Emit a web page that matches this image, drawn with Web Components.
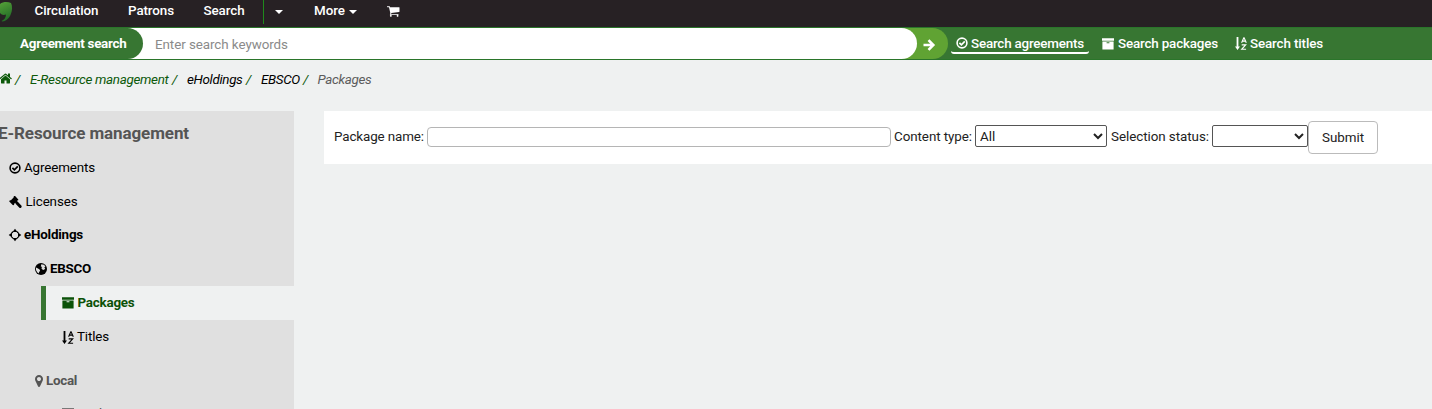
<!DOCTYPE html>
<html lang="en">
<head>
<meta charset="utf-8">
<title>E-Resource management</title>
<style>
html,body{margin:0;height:100%;overflow:hidden;background:#eff1f1}
body{font:13.4px/18px Roboto,"Liberation Sans",sans-serif;color:#000}
</style>
</head>
<body>
<erm-app></erm-app>
<script>
const define = (name, markup, setup) => {
  const template = document.createElement('template');
  template.innerHTML = markup;
  customElements.define(name, class extends HTMLElement {
    connectedCallback() {
      if (this.shadowRoot) return;
      this.attachShadow({mode: 'open'}).append(template.content.cloneNode(true));
      if (setup) setup(this, this.shadowRoot);
    }
  });
};

const icons = {
  home: ['64 200 1664 1400', '<path d="M1472 992v480q0 26-19 45t-45 19h-384v-384h-256v384h-384q-26 0-45-19t-19-45v-480q0-1 .5-3t.5-3l575-474 575 474q1 2 1 6zm223-69l-62 74q-8 9-21 11h-3q-13 0-21-7l-692-577-692 577q-12 8-24 7-13-2-21-11l-62-74q-8-10-7-23.5t11-21.5l719-599q32-26 76-26t76 26l244 204v-195q0-14 9-23t23-9h192q14 0 23 9t9 23v408l219 182q10 8 11 21.5t-7 23.5z"/>'],
  cart: ['64 256 1664 1408', '<path d="M704 1536q0 52-38 90t-90 38-90-38-38-90 38-90 90-38 90 38 38 90zm896 0q0 52-38 90t-90 38-90-38-38-90 38-90 90-38 90 38 38 90zm128-1088v512q0 24-16.5 42.5t-40.5 21.5l-1044 122q13 60 13 70 0 16-24 64h920q26 0 45 19t19 45-19 45-45 19h-1024q-26 0-45-19t-19-45q0-11 8-31.5t16-36 21.5-40 15.5-29.5l-177-823h-204q-26 0-45-19t-19-45 19-45 45-19h256q16 0 28.5 6.5t19.5 15.5 13 24.5 8 26 5.5 29.5 4.5 26h1201q26 0 45 19t19 45z"/>'],
  marker: ['384 128 1024 1536', '<path d="M1152 640q0-106-75-181t-181-75-181 75-75 181 75 181 181 75 181-75 75-181zm256 0q0 109-33 179l-364 774q-16 33-47.5 52t-67.5 19-67.5-19-46.5-52l-365-774q-33-70-33-179 0-212 150-362t362-150 362 150 150 362z"/>'],
  check: ['0 0 12 12', '<circle cx="6" cy="6" r="4.9" fill="none" stroke="currentColor" stroke-width="1.6"/><path d="M3.4 5.8 5.4 7.8 8.8 4.4" fill="none" stroke="currentColor" stroke-width="1.7"/>'],
  archive: ['0 0 12 12', '<path fill-rule="evenodd" d="M0 .2h12v2.5H0zM.4 3.4h11.2v8.2H.4zM4.6 4.3v1h2.8v-1z"/>'],
  sort: ['0 0 12 13', '<path d="M1.6 0h1.8v9.5H5L2.5 13 0 9.5h1.6z"/><path d="M6.6 5.7 8.8.7h.3l2.2 5M7.4 4.1h3.1M6.7 7.9h4L6.7 12.3h4.4" fill="none" stroke="currentColor" stroke-width="1.1"/>'],
  gavel: ['0 0 13 13', '<path d="M5.300 0 6.100 .1 9.300 3.400 9.200 4.200 8.400 4.400 7.900 4.900 8.800 5.800 12.500 9.800 12.700 10.900 11.700 12.100 10.700 12 6.800 8 6.200 6.700 5.200 7.700 5.100 8.700 4.400 9.200 3.700 9 .3 5.600 .3 4.900 1 4.300 1.900 4.300 4.600 1.600 4.600 .7z"/>'],
  move: ['0 0 12 12', '<path d="M6-.3 8.500 3H3.500zM6 12.300 3.500 9h5zM-.3 6 3 3.500v5zM12.300 6 9 8.500v-5z"/><path d="M2.800 4Q3.200 3.200 4 2.800M8 2.800Q8.800 3.200 9.200 4M9.200 8Q8.800 8.800 8 9.200M4 9.200Q3.200 8.800 2.800 8" fill="none" stroke="currentColor" stroke-width="1.300"/>'],
  globe: ['0 0 12 12', '<circle cx="6" cy="6" r="6"/><path class="land" d="M6.3 1.2 9 1.7l1.4 1.9-1.1.8.9 1.1-1.3 1.4-1.6-.4-1-1.6 1-.9-1.5-.6zM1 4.5l2 .9 1.6 1.2.5 1.2-1.1 1.4-.2 1.4-1.6-1.3L1 7z"/>'],
  arrow: ['0 0 12 12', '<path d="M.5 6H10M5.5 1.2 10.3 6l-4.8 4.8" fill="none" stroke="currentColor" stroke-width="2.6"/>'],
  caret: ['0 0 8 4', '<path d="M0 0h8L4 4z"/>'],
  leaf: ['0 0 12 22', '<defs><linearGradient id="g" x2=".3" y2="1"><stop stop-color="#55a038"/><stop offset="1" stop-color="#236c27"/></linearGradient></defs><path fill="url(#g)" d="M0 4C3 1.500 8 1.500 11 3c1.500 3 1.500 8-.5 12-1.500 3.500-5 6.500-8 6.500L1.500 21c2.500-1 4.500-3 4.500-6.500C4 15.500 1.500 15 0 13z"/>']
};

define('erm-icon', `<style>:host{display:inline-block;flex:none;line-height:0}svg{display:block;width:100%;height:100%;fill:currentColor;overflow:visible}.land{fill:var(--land,#e0e0e0)}</style>`, (host, root) => {
  const [box, shape] = icons[host.getAttribute('name')];
  root.innerHTML += `<svg viewBox="${box}">${shape}</svg>`;
  host.style.width = host.getAttribute('w') + 'px';
  host.style.height = host.getAttribute('h') + 'px';
});

/* A one-line label whose tracking is adjusted to occupy its "w" width. */
define('erm-label', `<style>:host{display:block;flex:none;white-space:nowrap}span{display:inline-block}</style><span><slot></slot></span>`, (host, root) => {
  const w = +host.getAttribute('w'), span = root.querySelector('span');
  host.style.width = w + 'px';
  const natural = span.getBoundingClientRect().width;
  span.style.letterSpacing = (w - natural) / host.textContent.length + 'px';
});

define('erm-topbar', `<style>
:host{display:flex;height:27px;background:#272124;color:#fff;font-weight:500;align-items:flex-start;box-sizing:border-box}
erm-label{margin-top:2px}
.rule{width:1px;height:24px;background:#1f8a1c;flex:none}
</style>
<erm-icon name="leaf" w="12" h="22"></erm-icon>
<erm-label w="64" style="margin-left:22.5px">Circulation</erm-label>
<erm-label w="46" style="margin-left:29.5px">Patrons</erm-label>
<erm-label w="41" style="margin-left:29.5px">Search</erm-label>
<span class="rule" style="margin-left:18.5px"></span>
<erm-icon name="caret" w="8" h="4" style="margin:10px 0 0 11px"></erm-icon>
<erm-label w="31" style="margin-left:31px">More</erm-label>
<erm-icon name="caret" w="8" h="4" style="margin:10px 0 0 4px"></erm-icon>
<erm-icon name="cart" w="12.500" h="11" style="margin:5.500px 0 0 30px"></erm-icon>`);

define('erm-search', `<style>
:host{display:flex;height:33px;background:#377632;border:solid #2a752a;border-width:1px 0;box-sizing:border-box;color:#fff;font-weight:500}
.title{width:143px;box-sizing:border-box;padding:7px 0 0 20px;font-weight:700;background:#377632;border-radius:0 16px 16px 0}
.field{display:flex;width:917px;background:#fff;border-radius:0 16px 16px 0}
.go{display:flex;width:948px;background:#60a333;border-radius:0 16px 16px 0}
input{border:0;background:none;outline:0;font:400 13.4px Roboto,sans-serif;padding:2px 12px 0;width:600px;letter-spacing:-.07px}
input::placeholder{color:#8a8a8a;opacity:1}
.tab{display:flex;align-items:flex-start;height:24px;box-sizing:border-box;padding-top:7px}
.tab[on]{border-bottom:2px solid #fff;border-radius:3px;height:26px}
</style>
<div class="go"><div class="field"><div class="title"><erm-label w="106.500">Agreement search</erm-label></div><input placeholder="Enter search keywords"></div>
<erm-icon name="arrow" w="12" h="12" style="margin:11px 0 0 6px"></erm-icon></div>
<div class="tab" on style="margin-left:3px;padding-left:6px;padding-right:5px"><erm-icon name="check" w="12" h="12" style="margin:2px 3px 0 -1px"></erm-icon><erm-label w="113">Search agreements</erm-label></div>
<div class="tab" style="margin-left:13px"><erm-icon name="archive" w="12" h="12" style="margin:3px 4px 0 0"></erm-icon><erm-label w="100">Search packages</erm-label></div>
<div class="tab" style="margin-left:17px"><erm-icon name="sort" w="12" h="13" style="margin:2px 3px 0 0"></erm-icon><erm-label w="73">Search titles</erm-label></div>`);

define('erm-crumbs', `<style>
:host{display:flex;height:51px;box-sizing:border-box;padding-top:11px;font-style:italic;color:#0c590a}
b{font-weight:400;width:6px}.k{color:#000}.g{color:#5c5c5c}
</style>
<erm-icon name="home" w="13" h="11" style="margin:2px 3px 0 -1px"></erm-icon><b>/</b>
<erm-label w="138.500" style="margin-left:9px">E-Resource management</erm-label><b style="margin-left:3.500px">/</b>
<erm-label class="k" w="55.500" style="margin-left:9px">eHoldings</erm-label><b style="margin-left:3.500px">/</b>
<erm-label class="k" w="39" style="margin-left:9px">EBSCO</erm-label><b style="margin-left:3px">/</b>
<erm-label class="g" w="54" style="margin-left:8.500px">Packages</erm-label>`);

define('erm-nav-item', `<style>
:host{display:flex;align-items:center;height:34px;box-sizing:border-box}
:host([bold]){font-weight:700}
:host([muted]){color:#555}
:host([current]){margin-left:41px;padding-left:16px!important;border-left:5px solid #377632;background:#eff1f1;color:#0b5208;font-weight:700}
</style><slot></slot>`);

define('erm-sidebar', `<style>
:host{display:block;width:294px;height:298px;overflow:hidden;background:#e0e0e0;flex:none}
h2{margin:0;font-size:17px;line-height:22px;padding-top:11px;height:29px;color:#555}
erm-label{margin-left:3px}
</style>
<h2><erm-label w="191" style="margin-left:-2px">E-Resource management</erm-label></h2>
<erm-nav-item style="padding-left:9px"><erm-icon name="check" w="12" h="12"></erm-icon><erm-label w="71">Agreements</erm-label></erm-nav-item>
<erm-nav-item style="padding-left:9px"><erm-icon name="gavel" w="13" h="13"></erm-icon><erm-label w="52" style="margin-left:3.500px">Licenses</erm-label></erm-nav-item>
<erm-nav-item bold style="padding-left:9px;height:32px"><erm-icon name="move" w="12" h="12"></erm-icon><erm-label w="59">eHoldings</erm-label></erm-nav-item>
<erm-nav-item bold style="padding-left:35px;height:36px"><erm-icon name="globe" w="12" h="12"></erm-icon><erm-label w="41">EBSCO</erm-label></erm-nav-item>
<erm-nav-item current style="margin-top:-1px"><erm-icon name="archive" w="12" h="12"></erm-icon><erm-label w="57" style="margin-left:3.500px">Packages</erm-label></erm-nav-item>
<erm-nav-item style="padding-left:62px"><erm-icon name="sort" w="12" h="13"></erm-icon><erm-label w="32">Titles</erm-label></erm-nav-item>
<erm-nav-item bold muted style="padding-left:35px;margin-top:10px"><erm-icon name="marker" w="8" h="12"></erm-icon><erm-label w="31">Local</erm-label></erm-nav-item>
<erm-nav-item muted style="padding-left:62px;height:32px"><erm-icon name="archive" w="12" h="12"></erm-icon><erm-label w="54" style="margin-left:4px">Packages</erm-label></erm-nav-item>`);

define('erm-filter', `<style>
:host{display:flex;flex:1;height:53px;box-sizing:border-box;margin-left:30px;padding:10px 0 0 10px;background:#fff;color:#222;align-items:flex-start}
erm-label{margin-top:7px}
input,select,button{font:13.4px Roboto,sans-serif;box-sizing:border-box;margin:0;background:#fff;color:#222}
input{width:464px;height:20px;margin:6px 3px 0;border:1px solid #b5b5b5;border-radius:4px}
select{height:22px;margin:4px 0 0 3px;border:1px solid #555;border-radius:2px;padding:0}
button{width:70px;height:33px;border:1px solid #bbb;border-radius:4px;padding:0;display:flex;justify-content:center;align-items:center}
</style>
<erm-label w="90">Package name:</erm-label><input>
<erm-label w="78">Content type:</erm-label><select style="width:132px"><option>All</option></select>
<erm-label w="98" style="margin-left:4px">Selection status:</erm-label><select style="width:96px"><option></option></select>
<button><erm-label w="42" style="margin:0">Submit</erm-label></button>`);

define('erm-app', `<style>:host{display:block}main{display:flex;align-items:flex-start}</style>
<erm-topbar></erm-topbar><erm-search></erm-search><erm-crumbs></erm-crumbs>
<main><erm-sidebar></erm-sidebar><erm-filter></erm-filter></main>`);
</script>
</body>
</html>
